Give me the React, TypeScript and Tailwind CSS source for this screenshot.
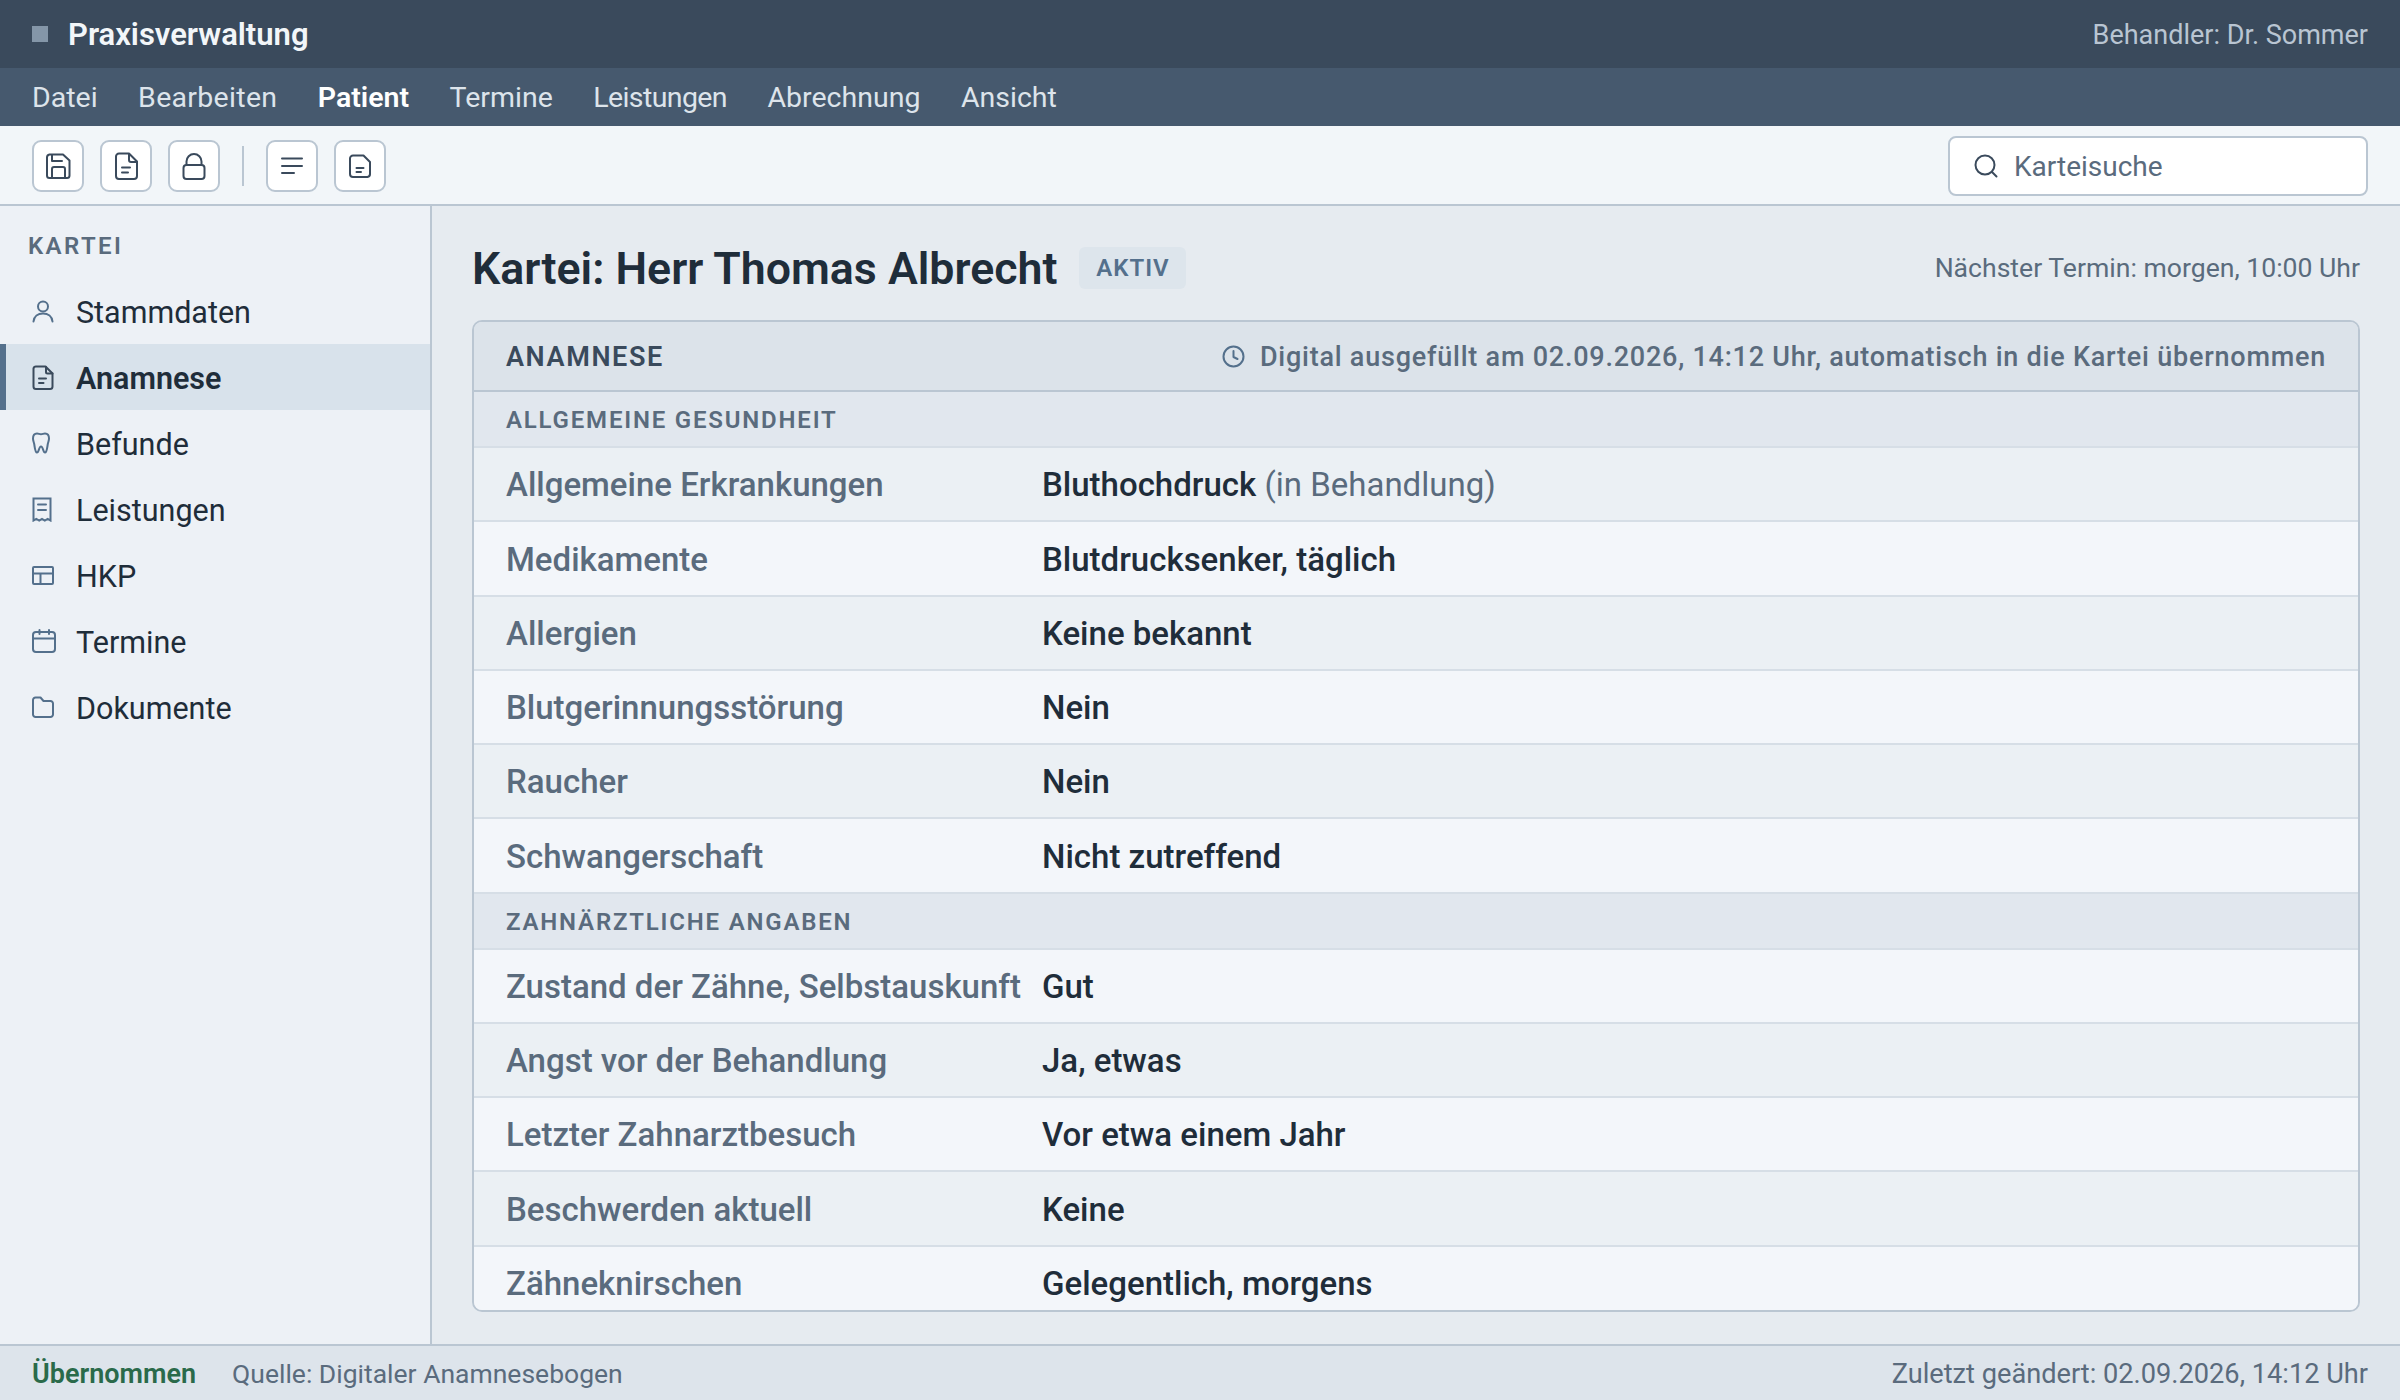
import type { ReactNode } from "react";

const MENU = [
  { label: "Datei" },
  { label: "Bearbeiten", cls: "tracking-[0.3px]" },
  { label: "Patient", cls: "font-semibold text-white" },
  { label: "Termine" },
  { label: "Leistungen", cls: "tracking-[-0.6px]" },
  { label: "Abrechnung" },
  { label: "Ansicht" },
];

function Ico({ w, h, children, className }: { w: number; h: number; children: ReactNode; className?: string }) {
  return (
    <svg
      width={w}
      height={h}
      viewBox={`0 0 ${w} ${h}`}
      fill="none"
      stroke="currentColor"
      strokeWidth={2}
      strokeLinecap="round"
      strokeLinejoin="round"
      className={className}
    >
      {children}
    </svg>
  );
}

const SaveIcon = () => (
  <Ico w={26} h={26}>
    <path d="M4.500 1.500H18l6.500 6v15a2.500 2.500 0 0 1-2.500 2.500H4.500A2.500 2.500 0 0 1 2 22.500v-18a3 3 0 0 1 2.500-3z" />
    <path d="M7 2v6h10" />
    <path d="M7 24.500V16a2 2 0 0 1 2-2h9a2 2 0 0 1 2 2v8.500" />
  </Ico>
);
const PageIcon = () => (
  <Ico w={24} h={28}>
    <path d="M5 1.500h10l8 8v14.500a3 3 0 0 1-3 3H5a3 3 0 0 1-3-3V4.500a3 3 0 0 1 3-3z" />
    <path d="M15 2v6a2 2 0 0 0 2 2h6" />
    <path d="M8 15.500h8M8 20.500h6" />
  </Ico>
);
const LockIcon = () => (
  <Ico w={24} h={28}>
    <rect x="1.500" y="13" width="21" height="14" rx="3" />
    <path d="M4.500 13V9.500a7.500 7.500 0 0 1 15 0V13" />
  </Ico>
);
const LinesIcon = () => (
  <Ico w={22} h={18}>
    <path d="M1 1.500h20M1 9h20M1 16h12" />
  </Ico>
);
const SmallFileIcon = () => (
  <Ico w={22} h={24}>
    <path d="M4 1.500h10.500L21 8v12a3 3 0 0 1-2.500 3H4a3 3 0 0 1-3-3V4.500a3 3 0 0 1 3-3z" />
    <path d="M7.500 14h7M7.500 18h4.500" />
  </Ico>
);

const UserIcon = () => (
  <Ico w={22} h={23}>
    <circle cx="11" cy="6.500" r="5" />
    <path d="M1.500 21.500c.5-5 4.500-8 9.500-8s9 3 9.500 8" />
  </Ico>
);
const DocIcon = () => (
  <Ico w={22} h={25}>
    <path d="M4 1.500h9.500l7 7v13a2.500 2.500 0 0 1-2.500 2.500H4a2.500 2.500 0 0 1-2.500-2.500v-18A2.500 2.500 0 0 1 4 1.500z" />
    <path d="M14 2v5a1.500 1.500 0 0 0 1.500 1.500h5" />
    <path d="M7 13.500h7M7 18h4.500" />
  </Ico>
);
const ToothIcon = () => (
  <Ico w={18} h={22}>
    <path d="M5 1.500c-2.500 0-4 2-4 5 0 2 .8 3.500 1.200 5.500.5 2.500.8 8.500 2.800 8.500 2 0 1.800-6 4-6s2 6 4 6c2 0 2.300-6 2.800-8.500.4-2 1.200-3.500 1.200-5.500 0-3-1.500-5-4-5-1.500 0-2.500.8-4 .8s-2.500-.8-4-.8z" />
  </Ico>
);
const ReceiptIcon = () => (
  <Ico w={20} h={25}>
    <path d="M1.500 1.500h17v22l-2.800-1.700-2.900 1.700-2.800-1.700-2.800 1.700-2.900-1.700-2.800 1.700z" strokeLinejoin="miter" />
    <path d="M6 7.500h8M6 13h8" />
  </Ico>
);
const TableIcon = () => (
  <Ico w={22} h={19}>
    <rect x="1" y="1" width="20" height="17" rx="1" />
    <path d="M1 7.500h20M8.500 7.500V18" />
  </Ico>
);
const CalendarIcon = () => (
  <Ico w={24} h={24}>
    <rect x="1" y="3" width="22" height="20" rx="3" />
    <path d="M1 9.500h22M7.500 1v4M17 1v4" />
  </Ico>
);
const FolderIcon = () => (
  <Ico w={22} h={22}>
    <path d="M3.500 1.500h5l3 3.500h7a2.500 2.500 0 0 1 2.500 2.500v11a2.500 2.500 0 0 1-2.500 2.500h-15A2.500 2.500 0 0 1 1 18.500v-14.500a2.500 2.500 0 0 1 2.500-2.500z" />
  </Ico>
);

const NAV = [
  { label: "Stammdaten", icon: <UserIcon /> },
  { label: "Anamnese", icon: <DocIcon />, active: true },
  { label: "Befunde", icon: <ToothIcon /> },
  { label: "Leistungen", icon: <ReceiptIcon /> },
  { label: "HKP", icon: <TableIcon /> },
  { label: "Termine", icon: <CalendarIcon /> },
  { label: "Dokumente", icon: <FolderIcon /> },
];

type Row = { label: string; value: ReactNode };

const GENERAL: Row[] = [
  {
    label: "Allgemeine Erkrankungen",
    value: (
      <>
        Bluthochdruck <span className="font-normal text-[#5a6b7d]">(in Behandlung)</span>
      </>
    ),
  },
  { label: "Medikamente", value: "Blutdrucksenker, täglich" },
  { label: "Allergien", value: "Keine bekannt" },
  { label: "Blutgerinnungsstörung", value: "Nein" },
  { label: "Raucher", value: "Nein" },
  { label: "Schwangerschaft", value: "Nicht zutreffend" },
];

const DENTAL: Row[] = [
  { label: "Zustand der Zähne, Selbstauskunft", value: "Gut" },
  { label: "Angst vor der Behandlung", value: "Ja, etwas" },
  { label: "Letzter Zahnarztbesuch", value: "Vor etwa einem Jahr" },
  { label: "Beschwerden aktuell", value: "Keine" },
  { label: "Zähneknirschen", value: "Gelegentlich, morgens" },
];

function ToolButton({ children }: { children: ReactNode }) {
  return (
    <button className="grid h-[52px] w-[52px] place-items-center rounded-[9px] border-2 border-[#bac6d2] bg-white text-[#3a4a5c]">
      {children}
    </button>
  );
}

function SectionHeader({ children }: { children: ReactNode }) {
  return (
    <div className="flex h-[56px] shrink-0 items-center border-b-2 border-[#d6dee6] bg-[#e1e7ee] px-[32px] pt-[2px] text-[24px] font-semibold tracking-[1.8px] text-[#5a6b7d]">
      {children}
    </div>
  );
}

function DataRows({ rows, lightFirst }: { rows: Row[]; lightFirst?: boolean }) {
  return (
    <>
      {rows.map((row, i) => (
        <div
          key={row.label}
          className={`flex h-[74.25px] shrink-0 items-center border-b-2 border-[#d6dee6] px-[32px] pt-[2px] text-[33px] ${
            (i % 2 === 0) === !!lightFirst ? "bg-[#f3f6fa]" : "bg-[#ebf0f4]"
          }`}
        >
          <div className="w-[536px] shrink-0 font-medium text-[#5a6b7d]">{row.label}</div>
          <div className="font-medium text-[#1f2d3a]">{row.value}</div>
        </div>
      ))}
    </>
  );
}

export default function App() {
  return (
    <div className="flex h-[1400px] flex-col overflow-hidden bg-[#e6ebf0] font-['Roboto',sans-serif] text-[#1f2d3a]">
      <header className="flex h-[68px] shrink-0 items-center justify-between bg-[#3a4a5c] px-[32px]">
        <div className="flex items-center gap-[20px]">
          <span className="h-[16px] w-[16px] bg-[#8496a8]" />
          <span className="pt-[2px] text-[31px] font-semibold text-[#f2f6f9]">Praxisverwaltung</span>
        </div>
        <span className="pt-[2px] text-[27px] text-[#b9c5d2]">Behandler: Dr. Sommer</span>
      </header>

      <nav className="flex h-[58px] shrink-0 items-center gap-[40.500px] bg-[#46596e] px-[32px] pt-[3px] text-[28.500px] text-[#dde4eb]">
        {MENU.map((m) => (
          <span key={m.label} className={m.cls}>
            {m.label}
          </span>
        ))}
      </nav>

      <div className="flex h-[80px] shrink-0 items-center justify-between border-b-2 border-[#bac6d2] bg-[#f2f6f9] px-[32px] pt-[2px]">
        <div className="flex items-center gap-[16px]">
          <ToolButton><SaveIcon /></ToolButton>
          <ToolButton><PageIcon /></ToolButton>
          <ToolButton><LockIcon /></ToolButton>
          <span className="mx-[6px] h-[40px] w-[2px] bg-[#bac6d2]" />
          <ToolButton><LinesIcon /></ToolButton>
          <ToolButton><SmallFileIcon /></ToolButton>
        </div>
        <div className="flex h-[60px] w-[420px] items-center gap-[16px] rounded-[8px] border-2 border-[#bac6d2] bg-white pl-[24px] text-[28px] text-[#5a6b7d]">
          <Ico w={24} h={24} className="text-[#3a4a5c]">
            <circle cx="11" cy="11" r="9.500" />
            <path d="M18 18l4.500 4.500" />
          </Ico>
          <span className="pt-[2px]">Karteisuche</span>
        </div>
      </div>

      <div className="flex min-h-0 flex-1">
        <aside className="flex w-[432px] shrink-0 flex-col border-r-2 border-[#bac6d2] bg-[#edf1f6]">
          <div className="flex h-[72px] shrink-0 items-end pb-[14px] pl-[28px] text-[24px] font-semibold tracking-[2.4px] text-[#5a6b7d]">
            KARTEI
          </div>
          {NAV.map((n) => (
            <div
              key={n.label}
              className={`flex h-[66px] shrink-0 items-center text-[30.500px] ${
                n.active ? "border-l-[6px] border-[#54708c] bg-[#d8e2eb] font-semibold" : "border-l-[6px] border-transparent"
              }`}
            >
              <span className={`flex w-[70px] justify-start pl-[26px] ${n.active ? "text-[#3a4a5c]" : "text-[#54708c]"}`}>
                {n.icon}
              </span>
              <span className="pt-[3px]">{n.label}</span>
            </div>
          ))}
        </aside>

        <main className="flex min-w-0 flex-1 flex-col px-[40px] pb-[32px]">
          <div className="mb-[25px] mt-[35px] flex h-[54px] shrink-0 items-center justify-between">
            <div className="flex items-center gap-[22px]">
              <h1 className="pt-[2px] text-[44.700px] font-semibold leading-none text-[#1f2d3a]">Kartei: Herr Thomas Albrecht</h1>
              <span className="flex h-[42px] w-[107px] items-center justify-center rounded-[6px] bg-[#dde5ec] text-[24px] font-semibold tracking-[1px] text-[#54708c]">
                AKTIV
              </span>
            </div>
            <span className="text-[26.600px] text-[#5a6b7d]">Nächster Termin: morgen, 10:00 Uhr</span>
          </div>

          <section className="flex min-h-0 flex-1 flex-col overflow-hidden rounded-[10px] border-2 border-[#bac6d2]">
            <div className="flex h-[70px] shrink-0 items-center justify-between border-b-2 border-[#bac6d2] bg-[#dce3ea] px-[32px]">
              <span className="pt-[2px] text-[27px] font-semibold tracking-[1.6px] text-[#3a4a5c]">ANAMNESE</span>
              <span className="flex items-center gap-[15px] text-[27px] font-medium tracking-[0.77px] text-[#5a6b7d]">
                <Ico w={23} h={23} className="text-[#54708c]">
                  <circle cx="11.500" cy="11.500" r="10" />
                  <path d="M11.500 6v6l4 2" />
                </Ico>
                <span className="pt-[2px]">Digital ausgefüllt am 02.09.2026, 14:12 Uhr, automatisch in die Kartei übernommen</span>
              </span>
            </div>
            <SectionHeader>ALLGEMEINE GESUNDHEIT</SectionHeader>
            <DataRows rows={GENERAL} />
            <SectionHeader>ZAHNÄRZTLICHE ANGABEN</SectionHeader>
            <DataRows rows={DENTAL} lightFirst />
          </section>
        </main>
      </div>

      <footer className="flex h-[56px] shrink-0 items-center justify-between border-t-2 border-[#bac6d2] bg-[#dde4eb] px-[32px] pt-[2px] text-[#5a6b7d]">
        <div className="flex items-center gap-[36px]">
          <span className="text-[27px] font-semibold text-[#2a6a4a]">Übernommen</span>
          <span className="text-[26.500px]">Quelle: Digitaler Anamnesebogen</span>
        </div>
        <span className="text-[27.200px]">Zuletzt geändert: 02.09.2026, 14:12 Uhr</span>
      </footer>
    </div>
  );
}
